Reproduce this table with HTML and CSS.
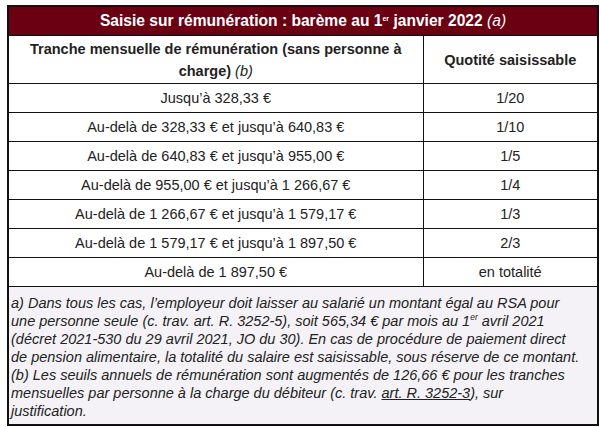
FILE: index.html
```html
<!DOCTYPE html>
<html lang="fr">
<head>
<meta charset="utf-8">
<link rel="stylesheet" href="styles.css">
</head>
<body>
<table class="bareme">
  <colgroup><col class="col1"><col class="col2"></colgroup>
  <thead>
    <tr><th colspan="2" class="title">Saisie sur rémunération : barème au 1<sup class="sup">er</sup> janvier 2022 <i class="note">(a)</i></th></tr>
    <tr class="colhead">
      <th>Tranche mensuelle de rémunération (sans personne à charge) <i class="note">(b)</i></th>
      <th>Quotité saisissable</th>
    </tr>
  </thead>
  <tbody>
    <tr><td>Jusqu’à 328,33 €</td><td>1/20</td></tr>
    <tr><td>Au-delà de 328,33 € et jusqu’à 640,83 €</td><td>1/10</td></tr>
    <tr><td>Au-delà de 640,83 € et jusqu’à 955,00 €</td><td>1/5</td></tr>
    <tr><td>Au-delà de 955,00 € et jusqu’à 1 266,67 €</td><td>1/4</td></tr>
    <tr><td>Au-delà de 1 266,67 € et jusqu’à 1 579,17 €</td><td>1/3</td></tr>
    <tr><td>Au-delà de 1 579,17 € et jusqu’à 1 897,50 €</td><td>2/3</td></tr>
    <tr><td>Au-delà de 1 897,50 €</td><td>en totalité</td></tr>
    <tr><td colspan="2" class="foot">a) Dans tous les cas, l’employeur doit laisser au salarié un montant égal au RSA pour<br>une personne seule (c. trav. art. R. 3252-5), soit 565,34 € par mois au 1<sup class="sup2">er</sup> avril 2021<br>(décret 2021-530 du 29 avril 2021, JO du 30). En cas de procédure de paiement direct<br>de pension alimentaire, la totalité du salaire est saisissable, sous réserve de ce montant.<br>(b) Les seuils annuels de rémunération sont augmentés de 126,66 € pour les tranches<br>mensuelles par personne à la charge du débiteur (c. trav. <span class="link">art. R. 3252-3</span>), sur<br>justification.</td></tr>
  </tbody>
</table>
</body>
</html>
```
FILE: styles.css
```css
html, body { margin: 0; padding: 0; background: #fff; }
body {
  padding: 5px 4px 0 7px;
  font-family: "Liberation Sans", Arial, sans-serif;
  color: #222;
}
.bareme {
  width: 590px;
  border-collapse: collapse;
  border: 2px solid #111;
  font-size: 14.5px;
  table-layout: fixed;
}
.col1 { width: 415px; }
.col2 { width: 175px; }
.bareme th, .bareme td {
  border: 1px solid #111;
  text-align: center;
  padding: 0 4px;
}
.title {
  background: #6b0013;
  color: #fff;
  font-size: 15.6px;
  font-weight: bold;
  height: 28px;
  padding: 0;
}
.sup { font-size: 7px; vertical-align: 5px; line-height: 0; }
.note { font-style: italic; font-weight: normal; }
.colhead th {
  height: 47px;
  font-weight: bold;
  font-size: 14.5px;
  line-height: 22px;
  vertical-align: middle;
  padding: 0 4px;
}
tbody td { height: 28px; font-size: 14.5px; }
.foot {
  background: #f4f2f6;
  text-align: left !important;
  font-style: italic;
  font-size: 14.5px;
  line-height: 18px;
  padding: 7px 2px 4px 2px !important;
  height: auto !important;
  white-space: nowrap;
}
.sup2 { font-size: 8.5px; vertical-align: 6px; line-height: 0; }
.link { text-decoration: underline; }
```
